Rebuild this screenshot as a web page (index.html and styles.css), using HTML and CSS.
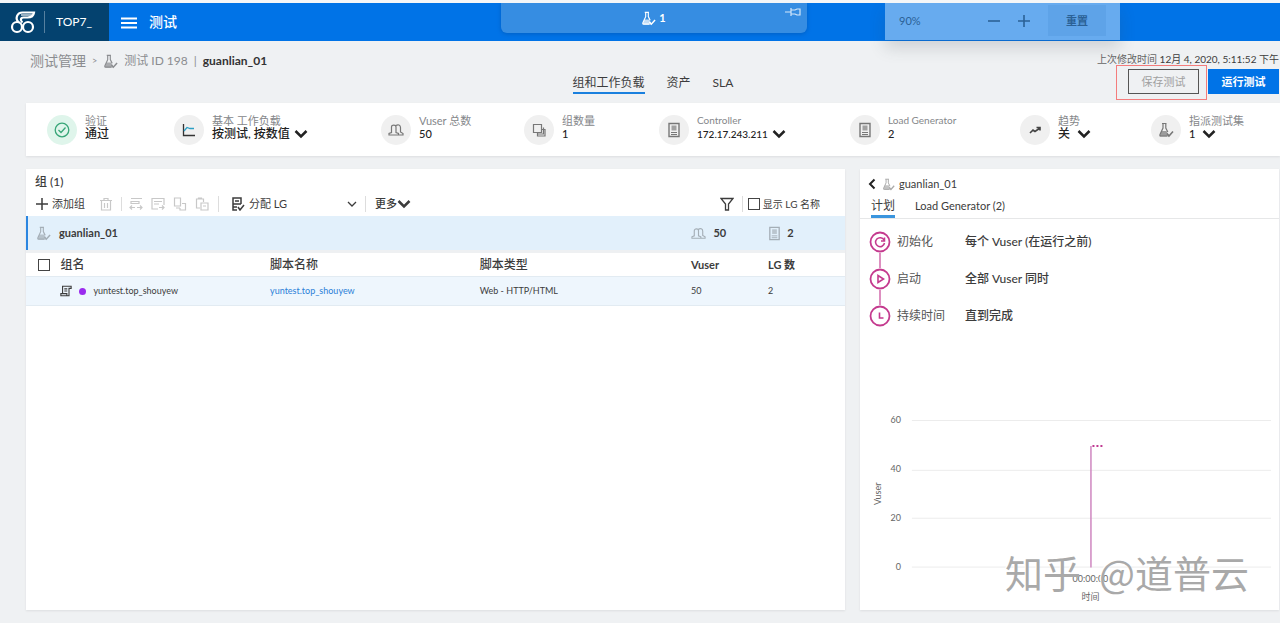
FILE: index.html
```html
<!DOCTYPE html>
<html lang="zh-CN">
<head>
<meta charset="utf-8">
<title>测试 - guanlian_01</title>
<link rel="stylesheet" href="styles.css">
</head>
<body>
<svg class="sprite" aria-hidden="true">
  <symbol id="flask" viewBox="0 0 16 16"><path d="M4 1.500h4.500M5 1.500V6L2 12.500q-.5 1.500 1 1.500h6M7.800 1.500V6l2 4" fill="none" stroke="currentColor" stroke-width="1.200"/><path d="M3.500 9h5l2.500 5.500H1.500z" fill="currentColor" opacity=".7"/><path d="m9 11.500 2 2.500 4-4.500" fill="none" stroke="currentColor" stroke-width="1.600"/></symbol>
  <symbol id="chevron" viewBox="0 0 14 10"><path d="M1.500 2 7 7.500 12.500 2" fill="none" stroke="currentColor" stroke-width="2.500"/></symbol>
  <symbol id="users" viewBox="0 0 16 16"><path d="M1 13v-1.500L3.500 10.500V5C3.500 2.500 8 2.500 8 5v5.500l2.500 1V13zM8 3.500c2-1.500 4.500-.5 4.500 2v4.500l2.500 1.500V13h-4" fill="none" stroke="currentColor" stroke-width="1.200"/></symbol>
  <symbol id="server" viewBox="0 0 16 16"><path d="M3 1.500h10v13H3z" fill="none" stroke="currentColor" stroke-width="1.400"/><path d="M5.500 3.500h5v5h-5z" fill="currentColor" opacity=".65"/><path d="M5 10.500h6M5 12.500h6" stroke="currentColor"/></symbol>
</svg>

<header class="topbar">
  <div class="brand">
    <svg class="logo" viewBox="0 0 26 24" fill="none" stroke="currentColor" stroke-width="2.200"><circle cx="7" cy="17" r="5"/><circle cx="18" cy="17" r="5"/><path d="M9 12.500C4.500 9 7 2.500 12.500 2.500H24C23.500 6 21 7.500 17.500 7.500h-4c-3.500 0-3 3.500-1 5"/><path d="M11 5h11.500" stroke-width="1.200"/></svg>
    <span class="tenant">TOP7_</span>
  </div>
  <button class="menu" aria-label="菜单"><svg viewBox="0 0 16 12"><path d="M0 1.500h16M0 6h16M0 10.500h16" stroke="currentColor" stroke-width="2"/></svg></button>
  <span class="module">测试</span>
  <div class="session">
    <svg class="i15"><use href="#flask"/></svg><span>1</span>
    <button class="pin" aria-label="固定"><svg viewBox="0 0 16 10" fill="none" stroke="currentColor" stroke-width="1.200"><path d="M0 5h6M6 1v8M6 3h4l2-1h3v6h-3l-2-1H6"/></svg></button>
  </div>
  <div class="zoombox">
    <span class="zoomlevel">90%</span>
    <button aria-label="缩小"><svg viewBox="0 0 12 12"><path d="M0 6h12" stroke="currentColor" stroke-width="1.600"/></svg></button>
    <button aria-label="放大"><svg viewBox="0 0 12 12"><path d="M0 6h12M6 0v12" stroke="currentColor" stroke-width="1.600"/></svg></button>
    <button class="reset">重置</button>
  </div>
</header>

<div class="page">
  <section class="subhead">
    <nav class="crumbs" aria-label="路径">
      <a href="#" class="root">测试管理</a><span class="gt">&gt;</span><svg class="i15"><use href="#flask"/></svg><a href="#">测试 ID 198</a><span>|</span><strong>guanlian_01</strong>
    </nav>
    <nav class="tabs" aria-label="测试视图">
      <a href="#" class="active">组和工作负载</a><a href="#">资产</a><a href="#">SLA</a>
    </nav>
    <div class="actions">
      <p class="modified"><span>上次修改时间</span> 12月 4, 2020, 5:11:52 下午</p>
      <div class="buttons">
        <span class="highlight"><button class="btn save">保存测试</button></span>
        <button class="btn run">运行测试</button>
      </div>
    </div>
  </section>

  <section class="summary">
    <div class="fact"><span class="disc ok"><svg viewBox="0 0 16 16" fill="none" stroke="currentColor" stroke-width="1.300"><circle cx="8" cy="8" r="6.800"/><path d="M4.500 8 7 10.500l4.500-5"/></svg></span><div><p>验证</p><b>通过</b></div></div>
    <div class="fact"><span class="disc"><svg viewBox="0 0 16 16" fill="none" stroke="#333" stroke-width="1.300"><path d="M2.500 2v11.500H14"/><path d="M3 9 6 5.500l3 1h4" stroke="#2d9fc4"/></svg></span><div><p>基本 工作负载</p><button class="drop">按测试, 按数值<svg><use href="#chevron"/></svg></button></div></div>
    <div class="fact"><span class="disc"><svg><use href="#users"/></svg></span><div><p>Vuser 总数</p><b class="num">50</b></div></div>
    <div class="fact"><span class="disc"><svg viewBox="0 0 16 16" fill="#f0f0f0" stroke="currentColor" stroke-width="1.200"><path d="M6.500 7.500H14V14H6.500z"/><path d="M2.500 2.500h8v8h-8z"/><path d="M12.500 5.500v6.500H6" fill="none"/></svg></span><div><p>组数量</p><b class="num">1</b></div></div>
    <div class="fact"><span class="disc"><svg><use href="#server"/></svg></span><div><p class="latin">Controller</p><button class="drop address">172.17.243.211<svg><use href="#chevron"/></svg></button></div></div>
    <div class="fact"><span class="disc"><svg><use href="#server"/></svg></span><div><p class="latin">Load Generator</p><b class="num">2</b></div></div>
    <div class="fact"><span class="disc"><svg viewBox="0 0 16 16" fill="none" stroke="#444" stroke-width="1.600"><path d="m3 11 3-3 2 1.500L13 6M9.500 5.500H13v3"/></svg></span><div><p>趋势</p><button class="drop wide">关<svg><use href="#chevron"/></svg></button></div></div>
    <div class="fact"><span class="disc"><svg><use href="#flask"/></svg></span><div><p>指派测试集</p><button class="drop wide num">1<svg><use href="#chevron"/></svg></button></div></div>
  </section>

  <main class="panels">
    <section class="panel groups">
      <h2>组 (1)</h2>
      <div class="toolbar">
        <button class="add"><svg viewBox="0 0 14 14"><path d="M1 7h12M7 1v12" stroke="currentColor" stroke-width="1.500"/></svg>添加组</button>
        <div class="set off">
          <button disabled aria-label="删除"><svg viewBox="0 0 14 14"><path d="M1 3.500h12M5 3.500v-2h4v2M2.500 3.500V13h9V3.500M5.500 6v5M8.500 6v5"/></svg></button>
        </div>
        <div class="set off">
          <button disabled aria-label="移动"><svg viewBox="0 0 14 14"><path d="M2 1.500h11M2 4.500h8v2H2zM1 10.500h5m-3-2-2 2 2 2M8 10.500h5m-2-2 2 2-2 2"/></svg></button>
          <button disabled aria-label="添加脚本"><svg viewBox="0 0 14 14"><path d="M7 12H1V1.500h12V8M3 4.500h8M3 7h5M8 10.500h5m-2-2 2 2-2 2"/></svg></button>
          <button disabled aria-label="复制"><svg viewBox="0 0 14 14"><path d="M1.500 1h6v8h-6zM9 6.500h3.500V13H7v-2M3 11h4"/></svg></button>
          <button disabled aria-label="粘贴"><svg viewBox="0 0 14 14"><path d="M5 11H1.500V2h7v3M3.500 2V1h3v1M6 6h7v7H6zM8 9h3"/></svg></button>
        </div>
        <label class="assign"><svg viewBox="0 0 14 14" fill="none" stroke="currentColor" stroke-width="1.500"><path d="M10 7V1H2v12h4M4 4h4M2 7h8M2 10h4M7 10l2 3 4-5"/></svg><select aria-label="分配 LG"><option>分配 LG</option></select><svg class="thin" viewBox="0 0 10 10" fill="none" stroke="currentColor" stroke-width="1.300"><path d="m1 3 4 4 4-4"/></svg></label>
        <div class="set more"><button>更多<svg class="arrow"><use href="#chevron"/></svg></button></div>
        <button class="filter" aria-label="筛选"><svg viewBox="0 0 14 14" fill="none" stroke="currentColor" stroke-width="1.300"><path d="M1 1.500h12L8.500 7v6h-3V7z"/></svg></button>
        <label class="set showlg"><input type="checkbox">显示 LG 名称</label>
      </div>
      <div class="current">
        <span class="name"><svg class="i15"><use href="#flask"/></svg>guanlian_01</span>
        <span class="count"><svg class="i15"><use href="#users"/></svg>50</span>
        <span class="count lg"><svg class="i15"><use href="#server"/></svg>2</span>
      </div>
      <table>
        <colgroup><col class="c-check"><col class="c-name"><col class="c-script"><col class="c-type"><col class="c-vuser"><col></colgroup>
        <thead><tr><th><input type="checkbox" aria-label="全选"></th><th>组名</th><th>脚本名称</th><th>脚本类型</th><th>Vuser</th><th>LG 数</th></tr></thead>
        <tbody><tr><td></td><td><span class="group"><svg viewBox="0 0 14 14" fill="none" stroke="currentColor" stroke-width="1.300"><path d="M3 9.500v-8h10V4h-2.500v8.500H1V10h7v2.500M5 4.500h3.500M5 7h3.500"/></svg><i></i>yuntest.top_shouyew</span></td><td><a href="#">yuntest.top_shouyew</a></td><td>Web - HTTP/HTML</td><td>50</td><td>2</td></tr></tbody>
      </table>
    </section>

    <aside class="panel detail">
      <div class="title"><button aria-label="返回"><svg viewBox="0 0 8 12" fill="none" stroke="currentColor" stroke-width="2"><path d="M6.500 1.500 2 6l4.500 4.500"/></svg></button><svg class="i13"><use href="#flask"/></svg>guanlian_01</div>
      <nav class="subtabs" aria-label="组详情"><a href="#" class="active">计划</a><a href="#">Load Generator (2)</a></nav>
      <ol class="steps">
        <li><svg viewBox="0 0 22 22" fill="none" stroke="currentColor" stroke-width="1.800"><circle cx="11" cy="11" r="9.500"/><path d="M15 9a4.500 4.500 0 1 0 .5 3M15.500 6.500v3.500H12" stroke-width="1.500"/></svg><span>初始化</span><b>每个 Vuser (在运行之前)</b></li>
        <li><svg viewBox="0 0 22 22" fill="none" stroke="currentColor" stroke-width="1.800"><circle cx="11" cy="11" r="9.500"/><path d="M9 7.500v7l5.500-3.500z" stroke-width="1.600"/></svg><span>启动</span><b>全部 Vuser 同时</b></li>
        <li><svg viewBox="0 0 22 22" fill="none" stroke="currentColor" stroke-width="1.800"><circle cx="11" cy="11" r="9.500"/><path d="M10.500 7.500v5.500h4" stroke-width="1.600"/></svg><span>持续时间</span><b>直到完成</b></li>
      </ol>
      <div class="chart">
        <svg viewBox="0 0 420 200" role="img" aria-label="Vuser 随时间变化">
          <path class="gridline" d="M52 10.500h360M52 60.500h360M52 108.500h360M52 157.500h360"/>
          <path class="series" d="M231.500 158V36"/>
          <path class="series dots" d="M233 36h11"/>
          <g class="ticks"><text x="41" y="13">60</text><text x="41" y="62">40</text><text x="41" y="111">20</text><text x="41" y="160">0</text></g>
          <g class="ticks mid"><text x="231" y="172">00:00:00</text><text x="231" y="190">时间</text><text transform="translate(21 84) rotate(-90)">Vuser</text></g>
        </svg>
        <span class="watermark"><span>知乎</span><span>@道普云</span></span>
      </div>
    </aside>
  </main>
</div>
</body>
</html>
```
FILE: styles.css
```css
* { box-sizing: border-box; }
body {
  margin: 0;
  min-height: 100vh;
  display: flex;
  flex-direction: column;
  background: #eff1f3;
  border-top: 3px solid #f4f6f8;
  color: #3c3c3c;
  font: 12px/16px Lato, "Noto Sans CJK SC", sans-serif;
  overflow-x: hidden;
}
p, h2, ol { margin: 0; padding: 0; }
a { color: inherit; text-decoration: none; }
button, select {
  display: inline-flex;
  align-items: center;
  padding: 0;
  border: 0;
  background: none;
  color: inherit;
  font: inherit;
  white-space: nowrap;
}
svg { display: block; flex: none; }
.sprite { position: absolute; width: 0; height: 0; }
.i15 { width: 15px; height: 15px; }
.i13 { width: 13px; height: 13px; }
input[type="checkbox"] {
  appearance: none;
  width: 12px;
  height: 12px;
  margin: 0;
  border: 1px solid #444;
  background: #fff;
}

.topbar {
  position: relative;
  display: flex;
  align-items: center;
  height: 38px;
  background: #0073e7;
  color: #fff;
}
.brand {
  display: flex;
  align-items: center;
  align-self: stretch;
  width: 109px;
  padding-left: 10px;
  background: #04426f;
}
.logo { width: 26px; height: 24px; }
.tenant {
  margin-left: 8px;
  padding-left: 11px;
  border-left: 1px solid #56809f;
  line-height: 22px;
}
.menu { margin: 2px 12px 0; }
.menu svg { width: 16px; height: 12px; }
.module { font-size: 14px; font-weight: 500; }
.session {
  position: absolute;
  top: 0;
  right: 0;
  left: 27px;
  display: flex;
  align-items: center;
  justify-content: center;
  gap: 3px;
  width: 306px;
  height: 30px;
  margin: auto;
  margin-top: 0;
  border-radius: 0 0 6px 6px;
  background: #368de2;
  box-shadow: 0 1px 4px #0060c4;
  font-size: 11px;
  font-weight: 700;
}
.pin { position: absolute; top: 4px; right: 6px; color: #d4e7fa; }
.pin svg { width: 16px; height: 10px; }
.zoombox {
  position: absolute;
  top: 0;
  right: 160px;
  display: flex;
  align-items: center;
  gap: 18px;
  width: 235px;
  height: 37px;
  padding: 0 14px 2px 14px;
  background: #67abef;
  box-shadow: 0 8px 16px rgb(60 70 80 / 18%);
  color: #2b6196;
  font-size: 11px;
}
.zoombox svg { width: 12px; height: 12px; }
.zoomlevel { flex: 1; }
.reset {
  justify-content: center;
  width: 58px;
  height: 31px;
  background: #5ea3e8;
  font-weight: 700;
}

.page {
  flex: 1;
  display: flex;
  flex-direction: column;
  padding: 0 0 13px 26px;
}
.subhead {
  display: grid;
  grid-template-columns: 1fr auto 1fr;
  min-height: 62px;
}
.crumbs {
  display: flex;
  align-items: center;
  gap: 6px;
  height: 40px;
  padding-left: 4px;
  color: #8b8d90;
  font-size: 12px;
}
.crumbs .root { font-size: 14px; }
.crumbs strong { color: #333; }
.crumbs .gt { font-size: 9px; }
.tabs {
  display: flex;
  align-items: flex-start;
  gap: 22px;
  padding-top: 33px;
}
.tabs a { line-height: 18px; }
.tabs .active { border-bottom: 2px solid #1a80de; }
.actions {
  display: flex;
  flex-direction: column;
  align-items: flex-end;
  padding: 9px 1px 0 0;
}
.modified { line-height: 19px; white-space: nowrap; font-size: 10px; }
.modified span { color: #666; }
.buttons { display: flex; gap: 9px; }
.btn {
  justify-content: center;
  width: 71px;
  height: 25px;
  font-size: 11px;
}
.save { border: 1px solid #555; color: #a0a0a0; }
.run { background: #0073e7; color: #fff; font-weight: 700; }
.highlight { position: relative; }
.highlight::after {
  content: "";
  position: absolute;
  inset: -4px -8px -6px -12px;
  border: 1px solid #f47c7c;
  pointer-events: none;
}

.summary {
  display: grid;
  grid-template-columns: 127fr 207fr 143fr 135fr 191fr 170fr 131fr 129fr;
  align-items: center;
  min-height: 53px;
  padding-left: 21px;
  background: #fff;
  box-shadow: 0 1px 2px #dcdee0;
  font-size: 12px;
  line-height: 13px;
}
.fact { display: flex; align-items: center; gap: 8px; white-space: nowrap; }
.fact div { padding-bottom: 5px; }
.fact p { color: #85878a; font-size: 11px; }
.fact .latin { font-size: 10px; }
.fact b { display: block; font-weight: 500; color: #222; }
.fact .num { font-size: 11px; }
.disc {
  display: grid;
  place-items: center;
  width: 30px;
  height: 30px;
  border-radius: 50%;
  background: #f0f0f0;
  color: #777;
}
.disc svg { width: 16px; height: 16px; }
.ok { background: #dff5eb; color: #38a678; }
.drop { gap: 4px; color: #222; font-weight: 500; }
.address { font-size: 10px; }
.wide { gap: 7px; }
.drop svg, .arrow { width: 14px; height: 10px; }

.panels {
  flex: 1;
  display: grid;
  grid-template-columns: 819fr 419fr;
  gap: 15px;
  margin-top: 13px;
  padding-right: 1px;
}
.panel {
  display: flex;
  flex-direction: column;
  background: #fff;
  box-shadow: 0 1px 2px #dcdee0;
}
.groups h2 { padding: 4px 9px; font-size: 12px; font-weight: 500; line-height: 18px; }
.toolbar {
  display: flex;
  align-items: center;
  height: 21px;
  padding: 0 25px 4px 9px;
  font-size: 11px;
}
.toolbar button svg { width: 14px; height: 14px; }
.toolbar button .arrow { height: 10px; }
.add { gap: 3px; }
.set { display: flex; align-items: center; gap: 8px; }
.set + .set, .more, .showlg { border-left: 1px solid #ddd; }
.off { padding: 0 8px 0 14px; color: #c8c8c8; }
.off + .off { padding: 0 9px 0 7px; }
.off svg { fill: none; stroke: currentColor; stroke-width: 1.2; }
.assign {
  display: flex;
  align-items: center;
  gap: 4px;
  width: 147px;
  padding: 0 8px 0 12px;
  border-left: 1px solid #ddd;
}
.assign svg { width: 14px; height: 14px; }
.assign .thin { width: 10px; height: 10px; }
.assign select { flex: 1; min-width: 0; appearance: none; }
.more { padding-left: 9px; font-weight: 500; }
.filter { margin: 0 8px 0 auto; }
.showlg { gap: 3px; padding-left: 5px; }
.showlg { font-size: 10px; }
.current {
  display: grid;
  grid-template-columns: 665fr 76fr 78fr;
  align-items: center;
  height: 34px;
  border-left: 2px solid #2b86e0;
  background: #e2f0fb;
  font-size: 11px;
  font-weight: 700;
}
.name, .count { display: flex; align-items: center; gap: 7px; }
.name { padding-left: 8px; gap: 8px; }
.current svg { color: #a4aeb6; }
.lg { gap: 5px; }
table { width: 100%; border-collapse: collapse; table-layout: fixed; border-top: 3px solid #eef0f2; }
th, td { padding: 0; text-align: left; white-space: nowrap; }
th { height: 25px; font-size: 12px; font-weight: 500; }
th:nth-child(n+5) { font-size: 11px; font-weight: 700; }
th input { display: block; }
th:first-child { padding-left: 12px; }
td {
  height: 29px;
  border: solid #e2ebf2;
  border-width: 1px 0;
  background: #eef6fd;
  font-size: 9px;
}
td a { color: #2b80d8; }
.c-check { width: 4.2%; }
.c-name, .c-script { width: 25.6%; }
.c-type { width: 25.8%; }
.c-vuser { width: 9.4%; }
.group { display: flex; align-items: center; gap: 7px; }
.group svg { width: 12px; height: 12px; }
.group i { width: 7px; height: 7px; border-radius: 50%; background: #9a2bee; }

.title {
  display: flex;
  align-items: center;
  gap: 4px;
  padding: 6px 8px 4px;
  font-size: 11px;
  line-height: 18px;
}
.title button svg { width: 8px; height: 12px; color: #222; }
.title > svg { color: #aaa; margin-left: 2px; }
.subtabs {
  display: flex;
  gap: 20px;
  padding-left: 11px;
  border-bottom: 1px solid #e6e7e8;
  font-size: 11px;
  line-height: 18px;
}
.subtabs .active { border-bottom: 3px solid #3a95de; font-size: 12px; }
.steps { padding: 12px 9px; list-style: none; }
.steps li {
  position: relative;
  display: grid;
  grid-template-columns: 22px 62px 1fr;
  align-items: center;
  column-gap: 6px;
  height: 22px;
  margin-bottom: 15px;
}
.steps svg { width: 22px; height: 22px; color: #c43a8e; }
.steps span { color: #555; }
.steps b { font-weight: 500; }
.steps li + li::before {
  content: "";
  position: absolute;
  top: -15px;
  left: 10px;
  width: 2px;
  height: 15px;
  background: #dd8fc0;
}
.chart { position: relative; margin-top: auto; }
.chart svg { width: 100%; }
.gridline { stroke: #ececec; }
.series { fill: none; stroke: #cf86c0; stroke-width: 1.5; }
.dots { stroke: #c03a92; stroke-width: 2; stroke-dasharray: 2 2; }
.ticks { font-size: 9px; fill: #666; text-anchor: end; }
.mid { text-anchor: middle; }
.watermark {
  position: absolute;
  right: 30px;
  bottom: 14px;
  display: flex;
  gap: 18px;
  color: #a9a9a9;
  font: 400 38px/48px "Noto Sans CJK SC", sans-serif;
  white-space: nowrap;
  text-shadow: -1px -1px 0 #fff;
}
```
